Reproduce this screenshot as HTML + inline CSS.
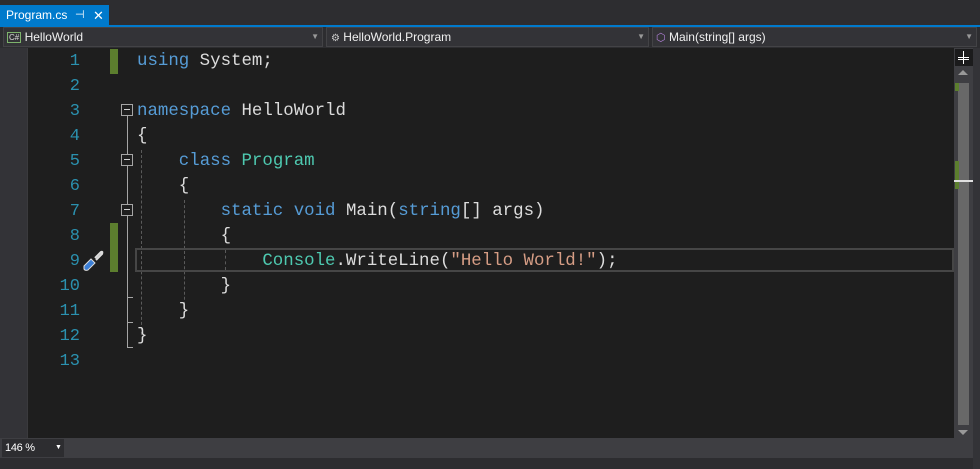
<!DOCTYPE html>
<html><head><style>
*{margin:0;padding:0;box-sizing:border-box}
html,body{width:980px;height:469px;overflow:hidden}
body{background:#2d2d30;position:relative;font-family:"Liberation Sans",sans-serif}
.abs{position:absolute}
.code{font-family:"Liberation Mono",monospace;font-size:17.42px;line-height:25px;white-space:pre;color:#dcdcdc}
.kw{color:#569cd6}.ty{color:#4ec9b0}.st{color:#d69d85}
.ln{position:absolute;left:28px;width:52px;text-align:right;color:#2b91af;font-family:"Liberation Mono",monospace;font-size:17px;line-height:25px}
.box{position:absolute;left:121px;width:12px;height:12px;border:1px solid #a5a5a5;background:#1e1e1e}
.box:after{content:"";position:absolute;left:2px;top:4px;width:6px;height:1px;background:#d0d0d0}
.dash{position:absolute;width:0;border-left:1px dashed #5a5a5a}
.dd{font-size:12px;color:#f1f1f1;line-height:18px;white-space:nowrap}
</style></head><body>
<!-- tab -->
<div class="abs" style="left:0;top:5px;width:109px;height:21px;background:#007acc;color:#fff;font-size:12px;line-height:21px;padding-left:6px;white-space:nowrap">Program.cs<span style="position:absolute;left:75px;top:0;font-size:11px">⊣</span><span style="position:absolute;left:93px;top:0;font-size:13px">✕</span></div>
<div class="abs" style="left:0;top:25px;width:980px;height:2px;background:#007acc"></div>
<!-- nav bar -->
<div class="abs dd" style="left:3px;top:27px;width:320px;height:20px;background:#333337;border:1px solid #434346;padding-left:3px"><span style="display:inline-block;border:1px solid #7db36c;color:#ddd;font-size:8px;line-height:9px;padding:0 1px;vertical-align:1px">C#</span> HelloWorld<span style="position:absolute;right:3px;color:#999;font-size:8px">▼</span></div>
<div class="abs dd" style="left:326px;top:27px;width:323px;height:20px;background:#333337;border:1px solid #434346;padding-left:4px"><span style="color:#ccc;font-size:10px">⚙</span> HelloWorld.Program<span style="position:absolute;right:3px;color:#999;font-size:8px">▼</span></div>
<div class="abs dd" style="left:652px;top:27px;width:325px;height:20px;background:#333337;border:1px solid #434346;padding-left:3px"><span style="color:#b180d7;font-size:11px">⬡</span> Main(string[] args)<span style="position:absolute;right:3px;color:#999;font-size:8px">▼</span></div>
<!-- editor -->
<div class="abs" style="left:0;top:48px;width:28px;height:390px;background:#333337;border-right:1px solid #3a3a3d"></div>
<div class="abs" style="left:28px;top:48px;width:926px;height:390px;background:#1e1e1e"></div>
<!-- scrollbar -->
<div class="abs" style="left:954px;top:48px;width:19px;height:390px;background:#3e3e42"></div>
<div class="abs" style="left:955px;top:49px;width:18px;height:17px;background:#1b1b1c"></div>
<div class="abs" style="left:958px;top:57px;width:11px;height:1px;background:#fff"></div>
<div class="abs" style="left:958px;top:59px;width:11px;height:1px;background:#fff"></div>
<div class="abs" style="left:963px;top:51px;width:1px;height:13px;background:#fff"></div>
<div class="abs" style="left:958px;top:70px;width:0;height:0;border-left:5px solid transparent;border-right:5px solid transparent;border-bottom:5px solid #999"></div>
<div class="abs" style="left:958px;top:83px;width:11px;height:342px;background:#686868"></div>
<div class="abs" style="left:955px;top:83px;width:4px;height:8px;background:#5c7e2e"></div>
<div class="abs" style="left:955px;top:161px;width:4px;height:28px;background:#5c7e2e"></div>
<div class="abs" style="left:954px;top:180px;width:19px;height:2px;background:#e0e0e0"></div>
<div class="abs" style="left:958px;top:430px;width:0;height:0;border-left:5px solid transparent;border-right:5px solid transparent;border-top:5px solid #999"></div>
<div class="abs" style="left:973px;top:48px;width:7px;height:421px;background:#333337"></div>
<!-- line numbers -->
<div class="ln" style="top:49px">1<br>2<br>3<br>4<br>5<br>6<br>7<br>8<br>9<br>10<br>11<br>12<br>13</div>
<!-- change bars -->
<div class="abs" style="left:110px;top:49px;width:8px;height:25px;background:#5c7e2e"></div>
<div class="abs" style="left:110px;top:223px;width:8px;height:49px;background:#5c7e2e"></div>
<!-- outline -->
<div class="abs" style="left:127px;top:110px;width:1px;height:238px;background:#a5a5a5"></div>
<div class="abs" style="left:127px;top:297px;width:6px;height:1px;background:#a5a5a5"></div>
<div class="abs" style="left:127px;top:322px;width:6px;height:1px;background:#a5a5a5"></div>
<div class="abs" style="left:127px;top:347px;width:6px;height:1px;background:#a5a5a5"></div>
<div class="box" style="top:104px"></div>
<div class="box" style="top:154px"></div>
<div class="box" style="top:204px"></div>
<!-- guides -->
<div class="dash" style="left:141px;top:150px;height:185px"></div>
<div class="dash" style="left:184px;top:200px;height:110px"></div>
<div class="dash" style="left:225px;top:250px;height:20px"></div>
<!-- current line -->
<div class="abs" style="left:135px;top:248px;width:819px;height:24px;border:2px solid #464646"></div>
<!-- screwdriver icon -->
<svg class="abs" style="left:81px;top:249px" width="24" height="24" viewBox="0 0 24 24"><path d="M14 9 L20 3 Q22 2 21 5 L15 11" stroke="#ddd" stroke-width="2" fill="none"/><path d="M3 17 L10 10 L14 14 L7 21 Q4 22 3 20Z" fill="#3c7fd6" stroke="#ddd" stroke-width="1"/></svg>
<div class="abs code" style="left:137px;top:49px"><span class="kw">using</span> System;

<span class="kw">namespace</span> HelloWorld
{
    <span class="kw">class</span> <span class="ty">Program</span>
    {
        <span class="kw">static</span> <span class="kw">void</span> Main(<span class="kw">string</span>[] args)
        {
            <span class="ty">Console</span>.WriteLine(<span class="st">"Hello World!"</span>);
        }
    }
}
</div>
<!-- bottom -->
<div class="abs" style="left:0;top:438px;width:973px;height:20px;background:#3e3e42"></div>
<div class="abs" style="left:2px;top:439px;width:62px;height:18px;background:#2d2d30;color:#fff;font-size:11px;letter-spacing:-0.3px;line-height:18px;padding-left:3px;white-space:nowrap">146 %<span style="position:absolute;left:53px;top:0;font-size:7px">▼</span></div>
<div class="abs" style="left:0;top:458px;width:973px;height:11px;background:#2d2d30"></div>
</body></html>
